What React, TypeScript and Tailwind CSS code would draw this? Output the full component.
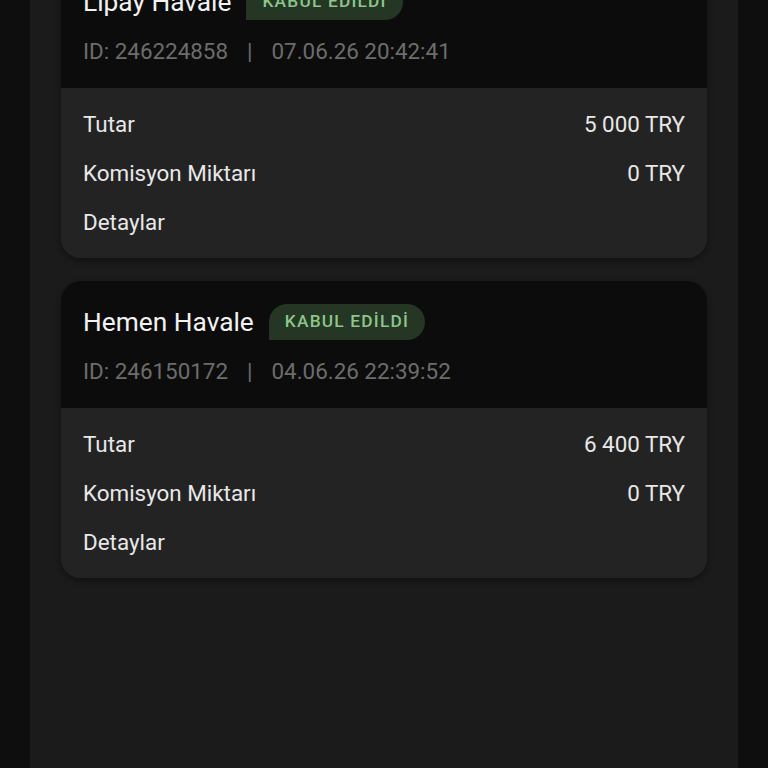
import React from "react";

interface Transfer {
  method: string;
  id: string;
  date: string;
  amount: string;
  fee: string;
}

const transfers: Transfer[] = [
  { method: "Lipay Havale", id: "246224858", date: "07.06.26 20:42:41", amount: "5 000 TRY", fee: "0 TRY" },
  { method: "Hemen Havale", id: "246150172", date: "04.06.26 22:39:52", amount: "6 400 TRY", fee: "0 TRY" },
];

function TransferCard({ t, first }: { t: Transfer; first?: boolean }) {
  return (
    <div
      className={`rounded-[20px] overflow-hidden shadow-[0_3px_6px_rgba(0,0,0,0.35)] ${first ? "-mt-[39px]" : ""}`}
    >
      {/* header */}
      <div className="bg-[#0c0c0c] px-[22px] pt-[23px] pb-[23px]">
        <div className="flex items-center gap-[15px]">
          <span className="text-[26.3px] leading-[36px] text-[#f2f2f2]">{t.method}</span>
          <span className="h-[36px] px-[16px] flex items-center rounded-[18px] rounded-bl-none bg-[#253625] text-[#8cc68a] text-[17.3px] font-medium tracking-[0.07em]">
            KABUL EDİLDİ
          </span>
        </div>
        <div className="mt-[17px] text-[22.4px] leading-[28px] text-[#6c6c6c] flex">
          <span>ID: {t.id}</span>
          <span className="mx-[19px]">|</span>
          <span>{t.date}</span>
        </div>
      </div>
      {/* body */}
      <div className="bg-[#232323] px-[22px] py-[22px] flex flex-col gap-[21px] text-[22.4px] leading-[28px] text-[#e8e8e8]">
        <div className="flex justify-between">
          <span>Tutar</span>
          <span>{t.amount}</span>
        </div>
        <div className="flex justify-between">
          <span>Komisyon Miktarı</span>
          <span>{t.fee}</span>
        </div>
        <div>Detaylar</div>
      </div>
    </div>
  );
}

export default function App() {
  return (
    <div
      className="w-[768px] h-[768px] overflow-hidden bg-[#0e0e0e] flex justify-center"
      style={{ fontFamily: "Roboto, 'Noto Sans', sans-serif" }}
    >
      <div className="w-[708px] h-full bg-[#1b1b1b] px-[31px] flex flex-col gap-[23px]">
        {transfers.map((t, i) => (
          <TransferCard key={t.id} t={t} first={i === 0} />
        ))}
      </div>
    </div>
  );
}
